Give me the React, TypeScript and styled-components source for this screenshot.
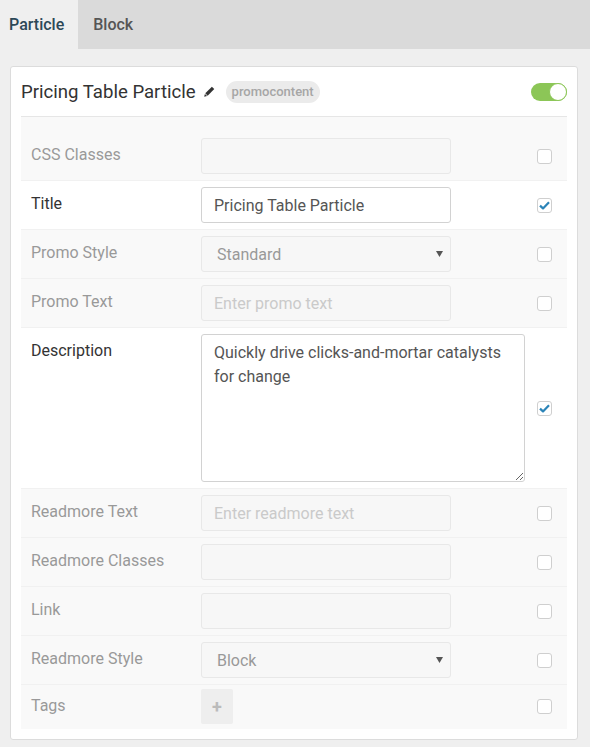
import styled, { createGlobalStyle } from "styled-components";

const GlobalStyle = createGlobalStyle`
    body {
        margin: 0;
        background: #efefef;
        font-family: Roboto, "Liberation Sans", Arial, sans-serif;
    }
`;

const TabBar = styled.div`
    display: flex;
    height: 49px;
    background: #dadada;
`;

const Tab = styled.div<{ $active?: boolean }>`
    display: flex;
    align-items: center;
    padding: ${(p) => (p.$active ? "0 14px 0 9px" : "0 15px")};
    background: ${(p) => (p.$active ? "#efefef" : "transparent")};
    color: ${(p) => (p.$active ? "#2c4857" : "#555")};
    font-size: 16px;
    font-weight: 500;
`;

const Page = styled.div`
    padding: 17px 12px 7px 10px;
`;

const Card = styled.div`
    background: #fff;
    border: 1px solid #dcdcdc;
    border-radius: 3px;
    padding: 0 10px 10px;
`;

const Header = styled.div`
    display: flex;
    align-items: center;
    height: 49px;
    border-bottom: 1px solid #e6e6e6;
`;

const Title = styled.span`
    font-size: 18.6px;
    color: #333;
    margin-right: 8px;
`;

const Badge = styled.span`
    display: inline-flex;
    align-items: center;
    height: 22px;
    padding: 0 6px;
    margin-left: 11px;
    border-radius: 11px;
    background: #ebebeb;
    color: #a6a6a6;
    font-size: 13px;
    font-weight: 500;
`;

const Toggle = styled.div`
    margin-left: auto;
    width: 36px;
    height: 18px;
    border-radius: 9px;
    background: #8cc657;
    display: flex;
    align-items: center;
    justify-content: flex-end;
    box-sizing: border-box;
`;

const Knob = styled.div`
    width: 18px;
    height: 18px;
    border-radius: 50%;
    background: #fff;
    border: 1px solid #8cc657;
    box-sizing: border-box;
`;

const Row = styled.div<{ $enabled?: boolean; $top?: number; $bottom?: number }>`
    display: grid;
    grid-template-columns: 180px 250px 1fr;
    align-items: start;
    padding: ${(p) => p.$top ?? 6}px 0 ${(p) => p.$bottom ?? 6}px;
    background: ${(p) => (p.$enabled ? "#fff" : "#f9f9f9")};
    border-bottom: 1px solid #f1f1f1;
    &:last-child {
        border-bottom: none;
    }
`;

const Label = styled.div<{ $enabled?: boolean }>`
    padding-left: 10px;
    line-height: 34px;
    font-size: 16px;
    color: ${(p) => (p.$enabled ? "#333" : "#999")};
`;

const TextInput = styled.input<{ $enabled?: boolean }>`
    box-sizing: border-box;
    width: 250px;
    height: 36px;
    margin: 0;
    padding: 0 12px;
    border: 1px solid ${(p) => (p.$enabled ? "#d2d2d2" : "#e8e8e8")};
    border-radius: 3px;
    background: ${(p) => (p.$enabled ? "#fff" : "#f7f7f7")};
    font-family: inherit;
    font-size: 16px;
    color: #555;
    outline: none;
    &::placeholder {
        color: #cacaca;
    }
`;

const SelectBox = styled.div`
    box-sizing: border-box;
    width: 250px;
    height: 36px;
    display: flex;
    align-items: center;
    justify-content: space-between;
    padding: 0 7px 0 15px;
    border: 1px solid #e8e8e8;
    border-radius: 3px;
    background: #f7f7f7;
    font-size: 16px;
    color: #999;
`;

const TextArea = styled.textarea`
    box-sizing: border-box;
    width: 324px;
    height: 148px;
    margin: 0;
    padding: 6px 12px;
    border: 1px solid #d2d2d2;
    border-radius: 3px;
    background: #fff;
    font-family: inherit;
    font-size: 16px;
    line-height: 24px;
    color: #555;
    resize: vertical;
    outline: none;
`;

const AddButton = styled.div`
    width: 32px;
    height: 35px;
    border-radius: 2px;
    background: #eee;
    color: #bbb;
    display: flex;
    align-items: center;
    justify-content: center;
    font-size: 18px;
    font-weight: 700;
`;

const Check = styled.div`
    justify-self: end;
    align-self: center;
    margin-right: 15px;
    width: 15px;
    height: 15px;
    box-sizing: border-box;
    border: 1px solid #cfcfcf;
    border-radius: 3px;
    background: #fff;
    display: flex;
    align-items: center;
    justify-content: center;
`;

const Pencil = () => (
    <svg width="11" height="11" viewBox="0 0 12 12">
        <path d="M8.6 0.8 L11.2 3.4 L4 10.6 L1.4 8 Z" fill="#333" />
        <path d="M1 8.6 L3.4 11 L0.2 11.8 Z" fill="#333" />
    </svg>
);

const Tick = () => (
    <svg width="11" height="9" viewBox="0 0 11 9">
        <path d="M1 4.6 L4 7.4 L10 1.2" fill="none" stroke="#2b84b8" strokeWidth="2.2" strokeLinejoin="round" />
    </svg>
);

const Arrow = () => (
    <svg width="7" height="6" viewBox="0 0 7 6">
        <path d="M0 0 H7 L3.5 6 Z" fill="#555" />
    </svg>
);

type Field = {
    label: string;
    kind: "input" | "select" | "textarea" | "tags";
    value?: string;
    placeholder?: string;
    enabled?: boolean;
};

const fields: Field[] = [
    { label: "CSS Classes", kind: "input" },
    { label: "Title", kind: "input", value: "Pricing Table Particle", enabled: true },
    { label: "Promo Style", kind: "select", value: "Standard" },
    { label: "Promo Text", kind: "input", placeholder: "Enter promo text" },
    { label: "Description", kind: "textarea", value: "Quickly drive clicks-and-mortar catalysts for change", enabled: true },
    { label: "Readmore Text", kind: "input", placeholder: "Enter readmore text" },
    { label: "Readmore Classes", kind: "input" },
    { label: "Link", kind: "input" },
    { label: "Readmore Style", kind: "select", value: "Block" },
    { label: "Tags", kind: "tags" },
];

function Control({ field }: { field: Field }) {
    switch (field.kind) {
        case "select":
            return (
                <SelectBox>
                    <span>{field.value}</span>
                    <Arrow />
                </SelectBox>
            );
        case "textarea":
            return <TextArea readOnly value={field.value} />;
        case "tags":
            return <AddButton>+</AddButton>;
        default:
            return (
                <TextInput
                    readOnly
                    $enabled={field.enabled}
                    value={field.value ?? ""}
                    placeholder={field.placeholder}
                />
            );
    }
}

export default function App() {
    return (
        <>
            <GlobalStyle />
            <TabBar>
                <Tab $active>Particle</Tab>
                <Tab>Block</Tab>
            </TabBar>
            <Page>
                <Card>
                    <Header>
                        <Title>Pricing Table Particle</Title>
                        <Pencil />
                        <Badge>promocontent</Badge>
                        <Toggle>
                            <Knob />
                        </Toggle>
                    </Header>
                    {fields.map((field, index) => (
                        <Row
                            key={index}
                            $enabled={field.enabled}
                            $top={index === 0 ? 21 : field.kind === "tags" ? 4 : 6}
                            $bottom={field.kind === "tags" ? 5 : 6}
                        >
                            <Label $enabled={field.enabled}>{field.label}</Label>
                            <Control field={field} />
                            <Check>{field.enabled && <Tick />}</Check>
                        </Row>
                    ))}
                </Card>
            </Page>
        </>
    );
}
